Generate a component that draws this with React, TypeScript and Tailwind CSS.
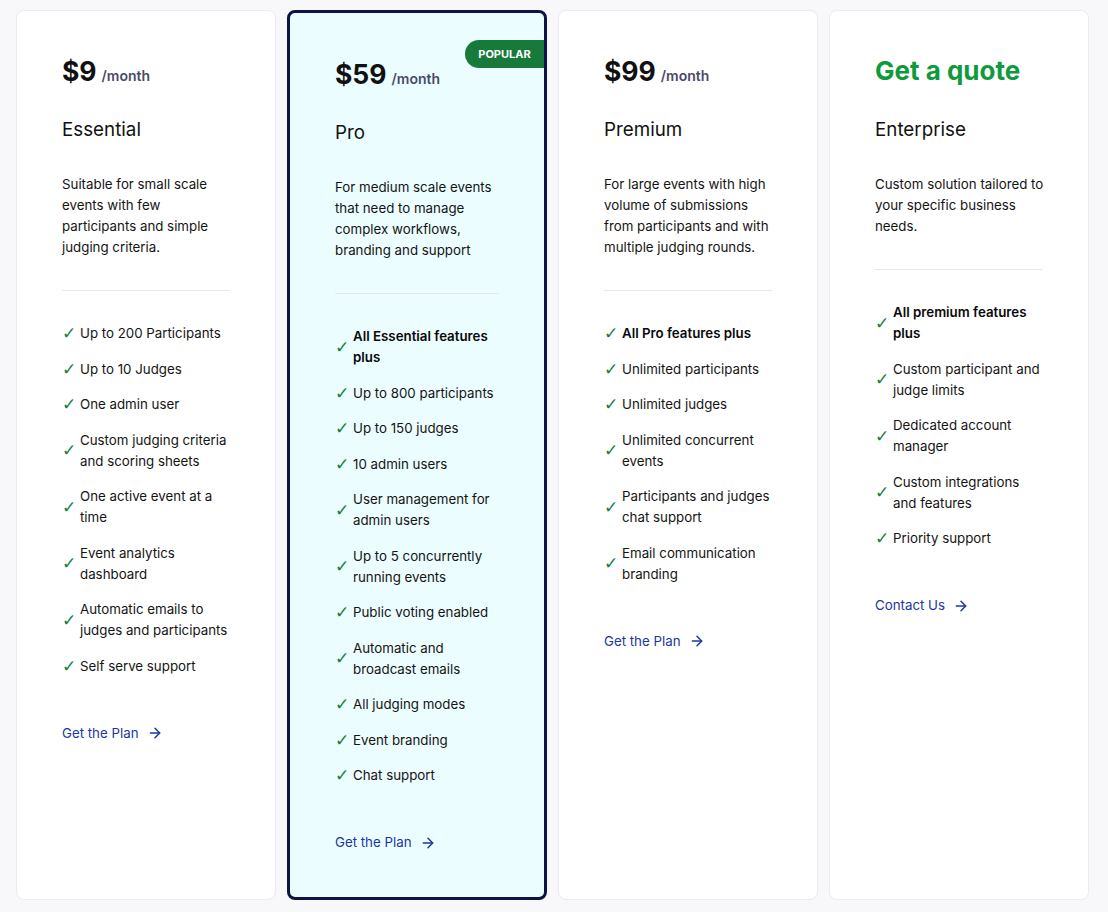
import { ArrowRight } from "lucide-react";

type Plan = {
  price?: string;
  quote?: string;
  name: string;
  desc: string;
  lead?: string;
  features: string[];
  cta: string;
  popular?: boolean;
};

const plans: Plan[] = [
  {
    price: "$9",
    name: "Essential",
    desc: "Suitable for small scale events with few participants and simple judging criteria.",
    features: [
      "Up to 200 Participants",
      "Up to 10 Judges",
      "One admin user",
      "Custom judging criteria and scoring sheets",
      "One active event at a time",
      "Event analytics dashboard",
      "Automatic emails to judges and participants",
      "Self serve support",
    ],
    cta: "Get the Plan",
  },
  {
    price: "$59",
    name: "Pro",
    desc: "For medium scale events that need to manage complex workflows, branding and support",
    lead: "All Essential features plus",
    features: [
      "Up to 800 participants",
      "Up to 150 judges",
      "10 admin users",
      "User management for admin users",
      "Up to 5 concurrently running events",
      "Public voting enabled",
      "Automatic and broadcast emails",
      "All judging modes",
      "Event branding",
      "Chat support",
    ],
    cta: "Get the Plan",
    popular: true,
  },
  {
    price: "$99",
    name: "Premium",
    desc: "For large events with high volume of submissions from participants and with multiple judging rounds.",
    lead: "All Pro features plus",
    features: [
      "Unlimited participants",
      "Unlimited judges",
      "Unlimited concurrent events",
      "Participants and judges chat support",
      "Email communication branding",
    ],
    cta: "Get the Plan",
  },
  {
    quote: "Get a quote",
    name: "Enterprise",
    desc: "Custom solution tailored to your specific business needs.",
    lead: "All premium features plus",
    features: [
      "Custom participant and judge limits",
      "Dedicated account manager",
      "Custom integrations and features",
      "Priority support",
    ],
    cta: "Contact Us",
  },
];

function Feature({ text, bold }: { text: string; bold?: boolean }) {
  return (
    <li className="flex items-center gap-[6px]">
      <span className="w-[12px] shrink-0 text-[17px] leading-[21px] font-bold text-[#15803d] [font-family:'DejaVu_Sans',sans-serif]">
        ✓
      </span>
      <span className={bold ? "font-semibold text-[#0a0a0a]" : "text-[#141414]"}>{text}</span>
    </li>
  );
}

function PlanCard({ plan }: { plan: Plan }) {
  return (
    <div
      className={
        plan.popular
          ? "relative rounded-lg border-[3px] border-[#0c1445] bg-[#ebfdfe] pl-[45px] pr-[40px] pt-[43px]"
          : "relative rounded-lg border border-[#ebebf0] bg-white pl-[45px] pr-[40px] pt-[42px]"
      }
    >
      {plan.popular && (
        <div className="absolute right-0 top-[27px] flex h-[28px] w-[79px] items-center justify-center rounded-l-full bg-[#177a3b] text-[11px] font-bold text-white">
          POPULAR
        </div>
      )}
      {plan.price ? (
        <div className="flex h-[36px] items-baseline gap-[5px] leading-[36px]">
          <span className="text-[26.5px] font-bold text-[#111]">{plan.price}</span>
          <span className="text-[14px] font-semibold text-[#4a4a68]">/month</span>
        </div>
      ) : (
        <div className="h-[36px] text-[26px] font-bold leading-[36px] text-[#0f9a3c]">{plan.quote}</div>
      )}
      <div className="mt-[27px] text-[18.8px] leading-[28px] text-[#111]">{plan.name}</div>
      <p className="mt-[30px] pr-[2px] text-[13.3px] leading-[21px] text-[#141414]">{plan.desc}</p>
      <div className="mr-[5px] mt-[32px] border-t border-[#e8e8ec]" />
      <ul className="mt-[32px] flex flex-col gap-[14.5px] pr-[5px] text-[13.3px] leading-[21px]">
        {plan.lead && <Feature text={plan.lead} bold />}
        {plan.features.map((f) => (
          <Feature key={f} text={f} />
        ))}
      </ul>
      <a className="mt-[46px] flex items-center gap-[8px] text-[13.3px] leading-[21px] text-[#1b379e]">
        {plan.cta}
        <ArrowRight size={16} strokeWidth={2.2} />
      </a>
    </div>
  );
}

export default function App() {
  return (
    <div className="min-h-[912px] bg-[#f8f8fb] pb-[12px] pl-[16px] pr-[19px] pt-[10px] [font-family:Inter,'Noto_Sans',sans-serif]">
      <div className="grid h-[890px] grid-cols-4 gap-[11px]">
        {plans.map((p) => (
          <PlanCard key={p.name} plan={p} />
        ))}
      </div>
    </div>
  );
}
